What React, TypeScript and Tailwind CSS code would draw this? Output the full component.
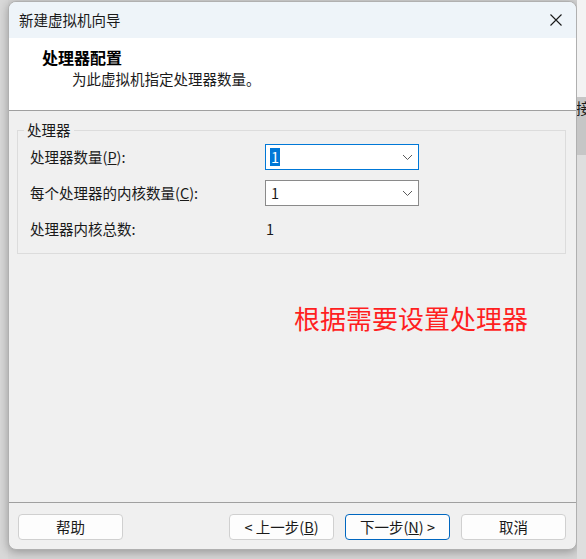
import React from 'react';

const font = "font-['Noto_Sans_CJK_SC','Noto_Sans',sans-serif]";

const Chevron: React.FC = () => (
  <svg width="11" height="7" viewBox="0 0 11 7" fill="none">
    <path d="M1 1L5.5 5.5L10 1" stroke="#5a5a5a" strokeWidth="1" />
  </svg>
);

interface ComboProps {
  value: string;
  focused?: boolean;
}

const Combo: React.FC<ComboProps> = ({ value, focused }) => (
  <div
    className={`w-[154px] h-[26px] bg-white border flex items-center justify-between pl-[4px] pr-[5px] ${
      focused ? 'border-[#0078d7]' : 'border-[#8a8a8a]'
    }`}
  >
    {focused ? (
      <span className="bg-[#0078d7] text-white leading-[18px] px-[1px]">{value}</span>
    ) : (
      <span className="text-[#1a1a1a] leading-[18px] pl-[1px]">{value}</span>
    )}
    <Chevron />
  </div>
);

interface BtnProps {
  children: React.ReactNode;
  primary?: boolean;
}

const Btn: React.FC<BtnProps> = ({ children, primary }) => (
  <button
    className={`w-[105px] h-[26px] rounded-[4px] bg-[#fdfdfd] border text-[14.5px] text-[#1a1a1a] flex items-center justify-center ${
      primary ? 'border-[#0067c0]' : 'border-[#d0d0d0]'
    }`}
  >
    {children}
  </button>
);

const App: React.FC = () => {
  return (
    <div className={`w-[586px] h-[559px] bg-[#d5d5d5] flex overflow-hidden ${font}`}>
      <div className="w-[8px] shrink-0 bg-[#d8d8d8]" />

      {/* dialog window */}
      <div className="w-[569px] h-[549px] mt-[1px] shrink-0 flex flex-col rounded-[8px] border border-[#b0b0b0] bg-[#f0f0f0] overflow-hidden shadow-[0_2px_10px_rgba(0,0,0,0.3)]">
        <div className="h-[36px] bg-[#eef4f9] flex items-center justify-between pl-[10px] pr-[14px]">
          <span className="text-[14.5px] text-[#1a1a1a] leading-[20px]">新建虚拟机向导</span>
          <svg width="12" height="12" viewBox="0 0 12 12">
            <path d="M0.5 0.5L11.5 11.5M11.5 0.5L0.5 11.5" stroke="#1a1a1a" strokeWidth="1.1" />
          </svg>
        </div>

        <div className="h-[72px] bg-white pt-[9px] pl-[33px]">
          <div className="text-[16px] font-bold text-black leading-[20px]">处理器配置</div>
          <div className="text-[14.5px] text-[#1a1a1a] leading-[20px] mt-[2px] pl-[30px]">
            为此虚拟机指定处理器数量。
          </div>
        </div>
        <div className="h-px bg-[#a0a0a0]" />

        <div className="flex-1 pt-[19px] pl-[8px] pr-[10px] text-[14.5px] text-[#1a1a1a]">
          <div className="relative h-[124px] border border-[#dcdcdc] pt-[13px] pl-[12px] flex flex-col gap-[10px]">
            <span className="absolute left-[6px] top-[-11px] px-[3px] bg-[#f0f0f0] leading-[20px]">处理器</span>
            <div className="flex items-center h-[26px]">
              <span className="w-[235px] leading-[20px]">
                处理器数量(<span className="underline">P</span>):
              </span>
              <Combo value="1" focused />
            </div>
            <div className="flex items-center h-[26px]">
              <span className="w-[235px] leading-[20px]">
                每个处理器的内核数量(<span className="underline">C</span>):
              </span>
              <Combo value="1" />
            </div>
            <div className="flex items-center h-[26px]">
              <span className="w-[236px] leading-[20px]">处理器内核总数:</span>
              <span className="leading-[20px]">1</span>
            </div>
          </div>

          <div className="mt-[46px] pl-[277px] text-[26px] leading-[36px] text-[#ff1f1f]">
            根据需要设置处理器
          </div>
        </div>

        <div className="h-px bg-[#a0a0a0]" />
        <div className="h-[46px] flex items-start pt-[11px] pl-[9px] pr-[10px]">
          <Btn>帮助</Btn>
          <div className="flex-1" />
          <div className="flex gap-[11px]">
            <Btn>
              &lt; 上一步(<span className="underline">B</span>)
            </Btn>
            <Btn primary>
              下一步(<span className="underline">N</span>) &gt;
            </Btn>
            <Btn>取消</Btn>
          </div>
        </div>
      </div>

      {/* window behind, peeking out on the right */}
      <div className="w-[9px] shrink-0 flex flex-col">
        <div className="h-[97px] bg-[#f3f3f3]" />
        <div className="h-[58px] bg-[#c6c6c6] overflow-hidden">
          <span className="block text-[15px] leading-[20px] text-[#1a1a1a] -ml-[1px] mt-[1px] whitespace-nowrap">接</span>
        </div>
        <div className="flex-1 bg-[#dedede]" />
      </div>
    </div>
  );
};

export default App;
